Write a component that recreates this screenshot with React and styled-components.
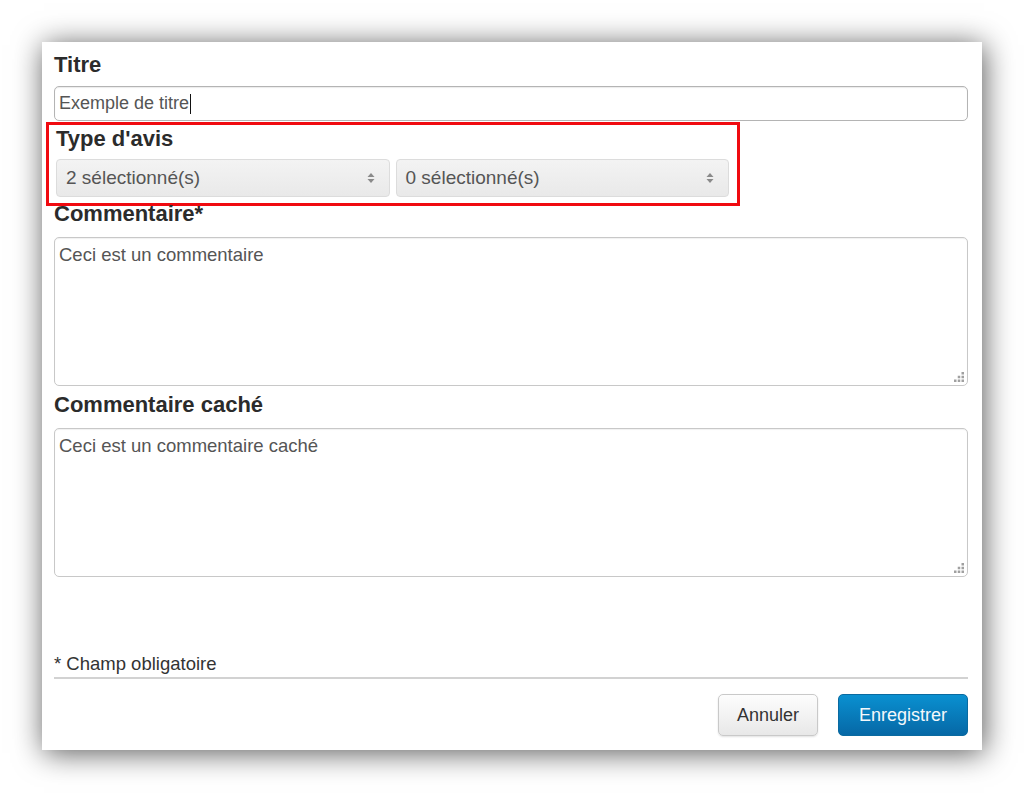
import React from 'react';
import styled, { createGlobalStyle } from 'styled-components';

const GlobalStyle = createGlobalStyle`
 html, body {
  margin: 0;
  background: #fff;
  font-family: "Liberation Sans", Arial, sans-serif;
 }
`;

const Page = styled.div`
 width: 1024px;
 height: 793px;
 box-sizing: border-box;
 padding: 42px 42px 43px 42px;
`;

const Panel = styled.div`
 height: 708px;
 background: #fff;
 box-shadow: 2px 3px 28px rgba(0, 0, 0, 0.66);
 padding: 0 14px 0 12px;
 display: flex;
 flex-direction: column;
 color: #333;
`;

const Label = styled.div`
 font-size: 22px;
 font-weight: bold;
 line-height: 24px;
 color: #2b2b2b;
 margin-top: ${({ $top }) => $top || 0}px;
 margin-bottom: ${({ $gap }) => $gap || 9}px;
`;

const Input = styled.div`
 height: 35px;
 box-sizing: border-box;
 border: 1px solid #b4b4b4;
 border-radius: 5px;
 box-shadow: inset 0 1px 1px rgba(0, 0, 0, 0.08);
 padding: 0 4px;
 display: flex;
 align-items: center;
 font-size: 18px;
 color: #555;
`;

const Caret = styled.span`
 display: inline-block;
 width: 1px;
 height: 20px;
 background: #111;
 margin-left: 1px;
`;

const Highlight = styled.div`
 width: 694px;
 box-sizing: border-box;
 margin: 1px 0 -4px -8px;
 border: 3px solid #f00a10;
 padding: 2px 8px 6px 7px;
`;

const SelectRow = styled.div`
 display: flex;
 gap: 6px;
`;

const Select = styled.div`
 flex: 1;
 height: 38px;
 box-sizing: border-box;
 border: 1px solid #dcdcdc;
 border-radius: 4px;
 background: linear-gradient(#f3f3f3, #e9e9e9);
 display: flex;
 align-items: center;
 justify-content: space-between;
 padding: 0 14px 0 9px;
 font-size: 19px;
 color: #555;
`;

const Arrows = () => (
  <svg width="8" height="12" viewBox="0 0 8 12">
    <path d="M4 1 L7.5 5 H0.5 Z M4 11 L7.5 7 H0.5 Z" fill="#8a8a8a" />
  </svg>
);

const TextArea = styled.div`
 position: relative;
 height: 149px;
 box-sizing: border-box;
 border: 1px solid #c8c8c8;
 border-radius: 5px;
 box-shadow: inset 0 1px 1px rgba(0, 0, 0, 0.06);
 padding: 6px 4px;
 font-size: 18.5px;
 line-height: 22px;
 color: #555;
 margin-bottom: ${({ $gap }) => $gap || 0}px;
`;

const Grip = styled.svg`
 position: absolute;
 right: 3px;
 bottom: 3px;
`;

const ResizeGrip = () => (
  <Grip width="10" height="10" viewBox="0 0 10 10">
    <g fill="#a0a0a0">
      <rect x="7.5" y="0" width="2.5" height="2.5" />
      <rect x="3.75" y="3.75" width="2.5" height="2.5" />
      <rect x="7.5" y="3.75" width="2.5" height="2.5" />
      <rect x="0" y="7.5" width="2.5" height="2.5" />
      <rect x="3.75" y="7.5" width="2.5" height="2.5" />
      <rect x="7.5" y="7.5" width="2.5" height="2.5" />
    </g>
  </Grip>
);

const Footer = styled.div`
 margin-top: auto;
 padding-bottom: 14px;
`;

const Note = styled.div`
 font-size: 18.5px;
 line-height: 22px;
 color: #333;
 padding-bottom: 2px;
 border-bottom: 2px solid #d2d2d2;
`;

const Actions = styled.div`
 display: flex;
 justify-content: flex-end;
 gap: 20px;
 margin-top: 15px;
`;

const Button = styled.button`
 height: 42px;
 box-sizing: border-box;
 padding: 0 ${({ $primary }) => ($primary ? 20 : 18)}px;
 border-radius: 5px;
 font-family: "Liberation Sans", Arial, sans-serif;
 font-size: 18px;
 cursor: pointer;
 border: 1px solid ${({ $primary }) => ($primary ? '#0a6aa0' : '#c9c9c9')};
 color: ${({ $primary }) => ($primary ? '#f4f8fb' : '#333')};
 background: ${({ $primary }) =>
   $primary ? 'linear-gradient(#0a90d0, #0668a6)' : 'linear-gradient(#fdfdfd, #e8e8e8)'};
 box-shadow: ${({ $primary }) => ($primary ? 'none' : '0 1px 2px rgba(0,0,0,0.12)')};
`;

const App = () => {
  return (
    <Page>
      <GlobalStyle />
      <Panel>
        <Label $top={11}>Titre</Label>
        <Input>
          Exemple de titre<Caret />
        </Input>
        <Highlight>
          <Label $gap={8}>Type d'avis</Label>
          <SelectRow>
            <Select>
              2 sélectionné(s)
              <Arrows />
            </Select>
            <Select>
              0 sélectionné(s)
              <Arrows />
            </Select>
          </SelectRow>
        </Highlight>
        <Label $gap={11}>Commentaire*</Label>
        <TextArea $gap={7}>
          Ceci est un commentaire
          <ResizeGrip />
        </TextArea>
        <Label $gap={11}>Commentaire caché</Label>
        <TextArea>
          Ceci est un commentaire caché
          <ResizeGrip />
        </TextArea>
        <Footer>
          <Note>* Champ obligatoire</Note>
          <Actions>
            <Button>Annuler</Button>
            <Button $primary>Enregistrer</Button>
          </Actions>
        </Footer>
      </Panel>
    </Page>
  );
};

export default App;
